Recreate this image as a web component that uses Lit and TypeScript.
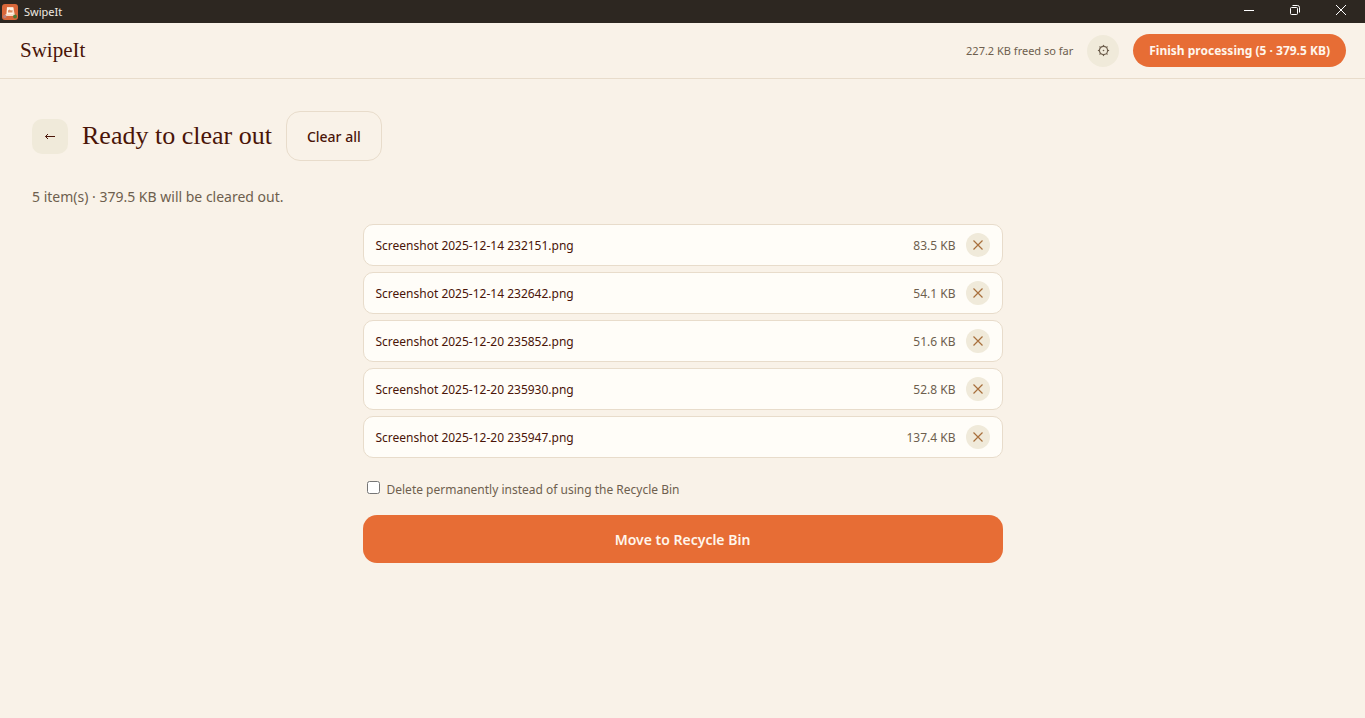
import { LitElement, html, css, svg } from "lit";
import { customElement, state } from "lit/decorators.js";

interface QueuedFile {
  name: string;
  size: string;
}

@customElement("app-root")
export class AppRoot extends LitElement {
  static styles = css`
    :host {
      --ink: #4a1508;
      --muted: #6e5f4e;
      --accent: #e76d35;
      --sand: #f0eada;
      --line: #e8dccb;
      display: flex;
      flex-direction: column;
      min-height: 100vh;
      background: #f9f2e8;
      color: var(--ink);
      font-family: "Segoe UI", "Noto Sans", sans-serif;
      font-size: 12px;
    }
    * {
      box-sizing: border-box;
    }
    button {
      font: inherit;
      color: inherit;
      border: 0;
      padding: 0;
      background: none;
      cursor: pointer;
    }
    svg {
      display: block;
    }
    .titlebar {
      display: flex;
      align-items: center;
      height: 23px;
      padding: 0 1px 0 2px;
      background: #2d2721;
      color: #efe9e0;
      font-size: 11px;
    }
    .titlebar-name {
      flex: 1;
      padding-left: 6px;
    }
    .window-button {
      display: grid;
      place-items: center;
      width: 46px;
      height: 23px;
      padding-bottom: 3px;
    }
    .header {
      display: flex;
      align-items: center;
      height: 56px;
      padding: 0 19px 0 20px;
      border-bottom: 1px solid var(--line);
    }
    .brand {
      flex: 1;
      font-family: Georgia, "Liberation Serif", serif;
      font-size: 21px;
    }
    .freed {
      margin-right: 14px;
      color: var(--muted);
      font-size: 11px;
    }
    .gear {
      display: grid;
      place-items: center;
      width: 32px;
      height: 32px;
      margin-right: 14px;
      border-radius: 50%;
      background: var(--sand);
      color: var(--muted);
    }
    .finish {
      height: 33px;
      padding: 0 16px;
      border-radius: 17px;
      background: var(--accent);
      color: #fff6ec;
      font-weight: 700;
    }
    .main {
      padding: 32px;
    }
    .heading {
      display: flex;
      align-items: center;
      gap: 14px;
    }
    .back {
      display: grid;
      place-items: center;
      width: 36px;
      height: 35px;
      border-radius: 10px;
      background: var(--sand);
    }
    h1 {
      margin: 0;
      font-family: Georgia, "Liberation Serif", serif;
      font-size: 26px;
      font-weight: 400;
    }
    .clear {
      height: 50px;
      padding: 0 20px;
      border: 1px solid var(--line);
      border-radius: 14px;
      font-size: 14px;
      font-weight: 500;
    }
    .summary {
      margin: 24px 0 16px;
      color: var(--muted);
      font-size: 14px;
      line-height: 23px;
    }
    .column {
      max-width: 640px;
      margin: 0 auto;
    }
    .files {
      display: flex;
      flex-direction: column;
      gap: 6px;
      margin: 0;
      padding: 0;
      list-style: none;
    }
    .file {
      display: flex;
      align-items: center;
      gap: 10px;
      height: 42px;
      padding: 0 12px;
      border: 1px solid var(--line);
      border-radius: 10px;
      background: #fffdf8;
    }
    .file-name {
      flex: 1;
    }
    .file-size {
      color: var(--muted);
    }
    .remove {
      display: grid;
      place-items: center;
      width: 24px;
      height: 24px;
      border-radius: 50%;
      background: var(--sand);
      color: #a86f3c;
    }
    .permanent {
      display: flex;
      align-items: center;
      gap: 7px;
      margin: 20px 0 14px;
      padding-left: 4px;
      color: var(--muted);
      line-height: 23px;
    }
    .permanent input {
      width: 13px;
      height: 13px;
      margin: 0 0 4px;
    }
    .move {
      width: 100%;
      height: 48px;
      border-radius: 14px;
      background: var(--accent);
      color: #fff6ec;
      font-size: 14px;
      font-weight: 600;
    }
  `;

  @state() private files: QueuedFile[] = [
    { name: "Screenshot 2025-12-14 232151.png", size: "83.5 KB" },
    { name: "Screenshot 2025-12-14 232642.png", size: "54.1 KB" },
    { name: "Screenshot 2025-12-20 235852.png", size: "51.6 KB" },
    { name: "Screenshot 2025-12-20 235930.png", size: "52.8 KB" },
    { name: "Screenshot 2025-12-20 235947.png", size: "137.4 KB" },
  ];

  private gearTeeth() {
    return [0, 45, 90, 135, 180, 225, 270, 315].map(
      (angle) => svg`<path d="M6.5 0.9V2.4" transform="rotate(${angle} 6.5 6.5)" />`
    );
  }

  render() {
    return html`
      <div class="titlebar">
        <svg width="16" height="16" viewBox="0 0 16 16" aria-hidden="true">
          <rect width="16" height="16" rx="3" fill="#d9673a" />
          <path d="M5 3h6l2 8H4z" fill="#f3c9ae" />
          <path d="M5 3.500h6.500v6.500H5z" fill="#fff3e6" />
          <path d="M3.500 10h9.500v2H3.500z" fill="#f7dcc8" />
          <path d="M6 8.500V6.500L7.500 5.500L9 6.500L10.500 6V8.500z" fill="#d98a62" />
          <circle cx="2.800" cy="12.500" r="1.700" fill="#b9807c" />
          <circle cx="13" cy="12.500" r="1.900" fill="#4c7a35" />
        </svg>
        <span class="titlebar-name">SwipeIt</span>
        <button class="window-button" aria-label="Minimize">
          <svg width="10" height="10" fill="none" stroke="#fff"><path d="M0 5.500H10" /></svg>
        </button>
        <button class="window-button" aria-label="Restore">
          <svg width="10" height="10" fill="none" stroke="#fff">
            <rect x="0.500" y="2.500" width="7" height="7" rx="1" />
            <path d="M2.500 0.500H7.500a2 2 0 0 1 2 2V7.500" />
          </svg>
        </button>
        <button class="window-button" aria-label="Close">
          <svg width="10" height="10" fill="none" stroke="#fff"><path d="M0 0L10 10M10 0L0 10" /></svg>
        </button>
      </div>
      <header class="header">
        <div class="brand">SwipeIt</div>
        <span class="freed">227.2 KB freed so far</span>
        <button class="gear" aria-label="Settings">
          <svg width="13" height="13" viewBox="0 0 13 13" fill="none" stroke="currentColor" stroke-width="1.2">
            <circle cx="6.5" cy="6.5" r="4.1" />
            <circle cx="6.5" cy="6.5" r="0.8" fill="currentColor" stroke="none" />
            ${this.gearTeeth()}
          </svg>
        </button>
        <button class="finish">Finish processing (5 · 379.5 KB)</button>
      </header>
      <main class="main">
        <div class="heading">
          <button class="back" aria-label="Back">
            <svg width="12" height="9" viewBox="0 0 12 9" fill="none" stroke="currentColor">
              <path d="M11 4.500H1.500M4 2L1.500 4.500L4 7" />
            </svg>
          </button>
          <h1>Ready to clear out</h1>
          <button class="clear">Clear all</button>
        </div>
        <p class="summary">5 item(s) · 379.5 KB will be cleared out.</p>
        <div class="column">
          <ul class="files">
            ${this.files.map(
              (file) => html`<li class="file">
                <span class="file-name">${file.name}</span>
                <span class="file-size">${file.size}</span>
                <button class="remove" aria-label="Remove ${file.name}">
                  <svg width="10" height="10" fill="none" stroke="currentColor" stroke-width="1.2">
                    <path d="M0.500 0.500L9.500 9.500M9.500 0.500L0.500 9.500" />
                  </svg>
                </button>
              </li>`
            )}
          </ul>
          <label class="permanent">
            <input type="checkbox" />
            <span>Delete permanently instead of using the Recycle Bin</span>
          </label>
          <button class="move">Move to Recycle Bin</button>
        </div>
      </main>
    `;
  }
}
